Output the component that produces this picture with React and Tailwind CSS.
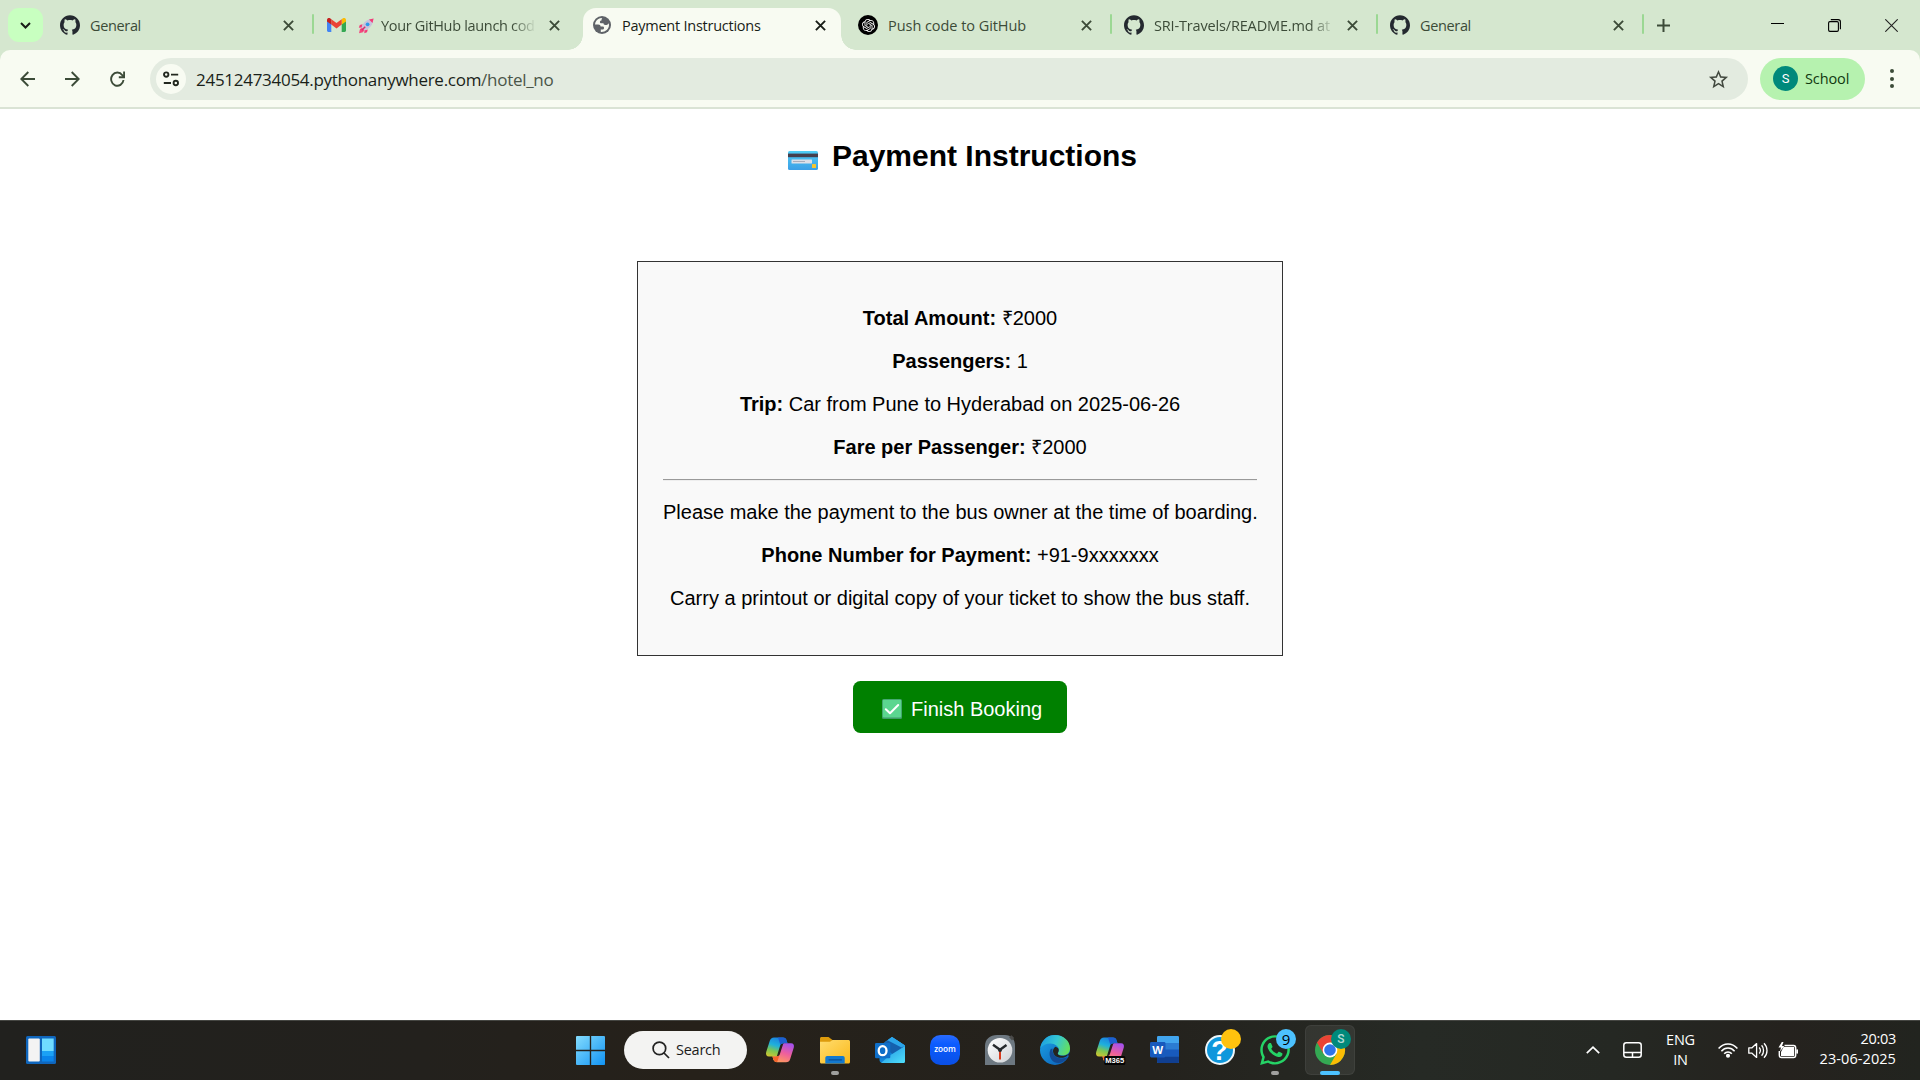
import React from "react";
import { SiGithub, SiOpenai } from "react-icons/si";
import { FaWhatsapp } from "react-icons/fa";
import { MdStarBorder } from "react-icons/md";

/* ---------- small shared glyphs ---------- */

function Cross({ className }) {
  return (
    <svg className={className} viewBox="0 0 11 11" fill="none" stroke="currentColor" strokeWidth="1.9">
      <path d="M0.9 0.9 10.1 10.1M10.1 0.9 0.9 10.1" />
    </svg>
  );
}

function GmailIcon() {
  return (
    <svg className="h-[14px] w-[19px]" viewBox="0 0 19 14">
      <path d="M0 2.2V12.6C0 13.4.6 14 1.4 14H4.3V5.6Z" fill="#4285f4" />
      <path d="M19 2.2V12.6c0 .8-.6 1.4-1.4 1.4H14.7V5.6Z" fill="#34a853" />
      <path d="M14.7 1.2V6.6L19 3.4V1.9C19 .2 17-.7 15.600.4Z" fill="#fbbc04" />
      <path d="M4.300 6.600V1.200L9.500 5.100 14.700 1.200V6.600L9.500 10.500Z" fill="#ea4335" />
      <path d="M0 1.900V3.400L4.300 6.600V1.200L3.400.4C2-.7 0 .2 0 1.900Z" fill="#c5221f" />
    </svg>
  );
}

function RocketIcon() {
  return (
    <svg className="h-4 w-4 shrink-0" viewBox="0 0 16 16">
      <path d="M4.500 6.200 1.800 7 .8 9.800 4 9.500ZM9.800 11.500 9 14.200 6.300 15.300 6.500 12Z" fill="#f23c78" />
      <path d="M1 15.200 2 11 4.200 9.800 6.300 12 5 14.200Z" fill="#f5487e" />
      <path d="M3.500 9.200C5 5 8.500 1.800 12.500 1L15 3.500C14.200 7.500 11 11 6.800 12.500Z" fill="#c9c3dc" />
      <path d="M11 1.500 15.600.400 14.500 5Z" fill="#f23c78" />
      <circle cx="9.600" cy="6.300" r="1.900" fill="#2f9bea" />
      <path d="M3.800 12.200 7.200 8.800" stroke="#d92f6c" strokeWidth="1.500" />
    </svg>
  );
}

function GlobeIcon() {
  return (
    <svg className="h-[18px] w-[18px] shrink-0" viewBox="0 0 18 18">
      <circle cx="9" cy="9" r="9" fill="#5f6368" />
      <path d="M9.200 2C6 2 3.300 4 2.300 6.800L2 8.600H5.200C6.800 8.600 7.600 9.400 7.600 10.600H9.800C10.600 10.600 11 11.200 11 12 11 13 10.300 13.600 9.300 13.600H7.800V15.900C12 16.300 16 13.200 16 9L15.700 7.300C15 8.700 13.800 9 12.300 9 11 9 10.500 8.400 10.500 7.300H8.300C7.300 7.300 6.900 6.700 6.900 5.900 6.900 5 7.500 4.400 8.500 4.400 8.500 3.300 8.700 2.600 9.200 2Z" fill="#f8fbf2" />
    </svg>
  );
}

function OpenAiIcon() {
  return (
    <span className="flex h-5 w-5 items-center justify-center rounded-full bg-black">
      <SiOpenai className="h-[13px] w-[13px] text-white" />
    </span>
  );
}

/* ---------- tab strip ---------- */

const GH = <SiGithub className="h-5 w-5 text-[#24292f]" />;

const tabs = [
  { icon: GH, title: "General", track: "tracking-[-0.35px]", sep: true },
  { icon: <GmailIcon />, title: "Your GitHub launch cod", track: "tracking-[-0.32px]", rocket: true, fade: true },
  { icon: <GlobeIcon />, title: "Payment Instructions", track: "tracking-[-0.25px]", active: true },
  { icon: <OpenAiIcon />, title: "Push code to GitHub", track: "tracking-[-0.05px]", sep: true },
  { icon: GH, title: "SRI-Travels/README.md at", track: "tracking-[-0.16px]", sep: true, fade: true },
  { icon: GH, title: "General", track: "tracking-[-0.35px]", sep: true },
];

function Tab({ tab }) {
  return (
    <div className={`relative flex h-[50px] w-[266px] shrink-0 items-center pl-[14px] ${tab.active ? "text-[#181d17]" : "text-[#3c4b38]"}`}>
      {tab.active && (
        <>
          <div className="absolute top-[7.500px] right-[3px] bottom-0 left-[5px] rounded-t-[13px] bg-[#f8fbf2]" />
          <div className="absolute bottom-0 left-[-10px] h-[15px] w-[15px] bg-[radial-gradient(circle_at_0_0,transparent_14.500px,#f8fbf2_15px)]" />
          <div className="absolute right-[-12px] bottom-0 h-[15px] w-[15px] bg-[radial-gradient(circle_at_100%_0,transparent_14.500px,#f8fbf2_15px)]" />
        </>
      )}
      <div className="relative flex w-5 shrink-0 justify-center">{tab.icon}</div>
      <div
        className={`relative ml-[10px] flex w-[179px] items-center gap-[7px] pt-[2px] whitespace-nowrap text-[14.5px] leading-5 ${tab.track} ${tab.fade ? "[mask-image:linear-gradient(to_right,black_87%,transparent_101%)]" : ""}`}
      >
        {tab.rocket && <span className="ml-[2px]"><RocketIcon /></span>}
        <span>{tab.title}</span>
      </div>
      <Cross className="relative ml-[14px] h-[11px] w-[11px] shrink-0" />
      {tab.sep && <div className="absolute top-[14px] right-[-2px] h-5 w-[2.500px] rounded-full bg-[#9bd893]" />}
    </div>
  );
}

function TabStrip() {
  return (
    <div className="flex h-[50px]">
      <div className="mt-2 ml-2 flex h-[34px] w-[34.500px] items-center justify-center rounded-[11px] bg-[#c8ffc0]">
        <svg className="h-[7px] w-[11px]" viewBox="0 0 11 7" fill="none" stroke="#181d17" strokeWidth="2">
          <path d="M1 1 5.500 5.500 10 1" />
        </svg>
      </div>
      <div className="ml-[3.500px] flex">
        {tabs.map((t, i) => (
          <Tab key={i} tab={t} />
        ))}
      </div>
      <div className="flex flex-1 items-center justify-between pr-[22.500px] pl-[15px]">
        <svg className="h-[13px] w-[13px]" viewBox="0 0 13 13" stroke="#3c4b38" strokeWidth="2">
          <path d="M6.500 0V13M0 6.500H13" />
        </svg>
        <div className="flex items-center gap-[44px] text-black">
          <div className="mb-[3px] h-px w-[13px] bg-black" />
          <svg className="h-[13px] w-[13px]" viewBox="0 0 13 13" fill="none" stroke="currentColor" strokeWidth="1.100">
            <rect x=".6" y="2.600" width="9.800" height="9.800" rx="1.300" />
            <path d="M2.800.6H10.200C11.500.6 12.400 1.500 12.400 2.800V10.200" />
          </svg>
          <svg className="h-[13px] w-[13px]" viewBox="0 0 13 13" stroke="#222" strokeWidth="1.100">
            <path d="M.3.3 12.700 12.700M12.700.3.3 12.700" />
          </svg>
        </div>
      </div>
    </div>
  );
}

/* ---------- toolbar ---------- */

function Toolbar() {
  return (
    <div className="flex h-[59px] items-center rounded-t-[10px] border-b-2 border-[#dae3d5] bg-[#f8fbf2] pl-5 text-[#3c4b38]">
      <svg className="h-4 w-[15px]" viewBox="0 0 15 16" fill="none" stroke="currentColor" strokeWidth="1.900">
        <path d="M15 8H1.500M8.300 1 1.300 8 8.300 15" />
      </svg>
      <svg className="ml-[30px] h-4 w-[15px]" viewBox="0 0 15 16" fill="none" stroke="currentColor" strokeWidth="1.900">
        <path d="M0 8H13.500M6.700 1 13.700 8 6.700 15" />
      </svg>
      <svg className="ml-[30px] h-4 w-[15px]" viewBox="0 0 15 16" fill="none" stroke="currentColor" strokeWidth="1.900">
        <path d="M13.500 9A6.200 6.600 0 1 1 12.300 4.200L14 6" />
        <path d="M14.100.6V6.300H8.800" />
      </svg>
      <div className="ml-[25px] flex h-[42px] w-[1598px] items-center rounded-full bg-[#e3ebe0] pr-[19px] pl-[6px]">
        <div className="flex h-[30px] w-[30px] items-center justify-center rounded-full bg-[#f8fbf2]">
          <svg className="h-4 w-4" viewBox="0 0 16 16" fill="none" stroke="#22281f" strokeWidth="1.900">
            <circle cx="3.200" cy="3.600" r="2.200" />
            <path d="M8 3.600H15.200M.8 12H8" />
            <circle cx="12.800" cy="12" r="2.200" />
          </svg>
        </div>
        <span className="ml-[10px] flex-1 pt-[2px] text-[17px] leading-6 tracking-[-0.28px] text-[#1a1f19]">
          245124734054.pythonanywhere.com<span className="text-[#4a5548]">/hotel_no</span>
        </span>
        <MdStarBorder className="mt-px h-[23px] w-[23px] translate-x-px text-[#42493f]" />
      </div>
      <div className="ml-3 flex h-[42px] w-[105px] items-center rounded-full bg-[#b6f2af] pl-[13px]">
        <span className="flex h-[25px] w-[25px] items-center justify-center rounded-full bg-[#00897b] font-['Roboto'] text-[13px] text-white">S</span>
        <span className="ml-[7px] text-[14.500px] tracking-[-0.1px] text-[#10380f]">School</span>
      </div>
      <div className="ml-[25px] flex flex-col gap-[3.200px]">
        <i className="h-1 w-1 rounded-full bg-[#3c4b38]" />
        <i className="h-1 w-1 rounded-full bg-[#3c4b38]" />
        <i className="h-1 w-1 rounded-full bg-[#3c4b38]" />
      </div>
    </div>
  );
}

/* ---------- page ---------- */

function CardEmoji() {
  return (
    <svg className="h-[19px] w-[30px]" viewBox="0 0 30 19">
      <defs>
        <linearGradient id="card" x1="0" y1="0" x2="0" y2="1">
          <stop offset="0" stopColor="#4fcdf5" />
          <stop offset="1" stopColor="#3c9fe6" />
        </linearGradient>
      </defs>
      <rect width="30" height="19" rx="1.600" fill="url(#card)" />
      <rect y="2.600" width="30" height="3.600" fill="#443f4d" />
      <rect x="3.500" y="8.500" width="20.500" height="4" rx=".5" fill="#dcdfe8" />
      <rect x="5" y="10" width="12" height="1" fill="#a9adba" />
      <rect x="24" y="13" width="4" height="4" rx=".6" fill="#f7c52e" />
    </svg>
  );
}

function CheckEmoji() {
  return (
    <svg className="h-5 w-5" viewBox="0 0 20 20">
      <rect width="20" height="20" rx="1.500" fill="#3f9b68" />
      <rect x=".8" y=".8" width="18.400" height="17.800" rx="1" fill="#5bd68f" />
      <path d="M3.800 10.200 8 14.300 16.200 6" fill="none" stroke="#fff" strokeWidth="2" strokeLinecap="round" strokeLinejoin="round" />
    </svg>
  );
}

function Page() {
  return (
    <main className="flex flex-1 flex-col items-center bg-white pt-[30px] font-['Liberation_Sans',Arial,sans-serif] text-[20px] leading-[23px] text-black">
      <h2 className="flex h-[34px] items-center text-[30px] leading-[34px] font-bold">
        <span className="mt-[9px] flex w-[49px] pl-[5px]">
          <CardEmoji />
        </span>
        Payment Instructions
      </h2>
      <section className="mt-[88px] flex h-[395px] w-[646px] flex-col gap-5 border border-[#333] bg-[#f9f9f9] px-[25px] pt-[45px] text-center whitespace-nowrap">
        <p><b>Total Amount:</b> ₹2000</p>
        <p><b>Passengers:</b> 1</p>
        <p><b>Trip:</b> Car from Pune to Hyderabad on 2025-06-26</p>
        <p><b>Fare per Passenger:</b> ₹2000</p>
        <div className="h-[2px] self-stretch border-t border-b border-t-[#9a9a9a] border-b-[#eee]" />
        <p>Please make the payment to the bus owner at the time of boarding.</p>
        <p><b>Phone Number for Payment:</b> +91-9xxxxxxx</p>
        <p>Carry a printout or digital copy of your ticket to show the bus staff.</p>
      </section>
      <button className="mt-[25px] flex h-[52px] w-[214px] items-center rounded-[7.500px] bg-[#008000] pl-[29px] text-white">
        <span className="mt-[3px]"><CheckEmoji /></span>
        <span className="mt-[5px] ml-[9px]">Finish Booking</span>
      </button>
    </main>
  );
}

/* ---------- taskbar icons, 30 x 30 each ---------- */

function Icon({ children }) {
  return <svg className="h-[30px] w-[30px] overflow-visible" viewBox="0 0 30 30">{children}</svg>;
}

function Gradients() {
  return (
    <svg className="absolute h-0 w-0">
      <defs>
        <linearGradient id="win" gradientUnits="userSpaceOnUse" x1="0" y1="0" x2="30" y2="30">
          <stop offset="0" stopColor="#84dcfd" /><stop offset="1" stopColor="#1193f3" />
        </linearGradient>
        <linearGradient id="copL" x1="0.600" y1="0" x2="0.300" y2="1">
          <stop offset="0" stopColor="#1a7fe0" /><stop offset=".35" stopColor="#1fb0dc" /><stop offset=".6" stopColor="#7cc653" /><stop offset="1" stopColor="#f7c51e" />
        </linearGradient>
        <linearGradient id="copR" x1="0.700" y1="0" x2="0.300" y2="1">
          <stop offset="0" stopColor="#a651ec" /><stop offset=".5" stopColor="#ee5f9d" /><stop offset="1" stopColor="#ff9a5e" />
        </linearGradient>
        <linearGradient id="fold" x1="0" y1="0" x2="1" y2="1">
          <stop offset="0" stopColor="#ffdc6e" /><stop offset="1" stopColor="#fbb91a" />
        </linearGradient>
        <linearGradient id="edgeTop" x1="0" y1="0.300" x2="1" y2="0.600">
          <stop offset="0" stopColor="#1c9ee0" /><stop offset=".5" stopColor="#35c7d3" /><stop offset="1" stopColor="#66e05a" />
        </linearGradient>
        <linearGradient id="edgeMid" x1="0" y1="0" x2="1" y2="1">
          <stop offset="0" stopColor="#1ca4e6" /><stop offset="1" stopColor="#0a5bb5" />
        </linearGradient>
        <linearGradient id="olk" x1="0" y1="0" x2="1" y2="1">
          <stop offset="0" stopColor="#1e8ee0" /><stop offset="1" stopColor="#50e0fb" />
        </linearGradient>
        <linearGradient id="clk" x1="0" y1="0" x2="1" y2="1">
          <stop offset="0" stopColor="#ffffff" /><stop offset="1" stopColor="#cfd2d6" />
        </linearGradient>
        <linearGradient id="zm" x1="0" y1="0" x2="0" y2="1">
          <stop offset="0" stopColor="#2a6bff" /><stop offset=".3" stopColor="#0b5cff" /><stop offset="1" stopColor="#0a4fe6" />
        </linearGradient>
      </defs>
    </svg>
  );
}

function CopilotShape() {
  return (
    <>
      <path d="M9 2.500H18C20 2.500 21 3.600 21.500 5.200L22.500 8.300H18.500C16.500 8.300 15.500 9.300 15 11L11.500 22.500C11 24.500 10 27 8.500 25L7.500 21.500H4C1.500 21.500.5 19.500 1.200 17L4.800 5.800C5.400 3.800 6.800 2.500 9 2.500Z" fill="url(#copL)" />
      <path d="M13 2.500H18C20 2.500 21 3.600 21.500 5.200L22.500 8.300H18.500C17 8.300 16 9 15.500 10.200Z" fill="#1d5fd0" />
      <path d="M21 27.200H12C10 27.200 9 26.200 8.500 24.600L7.500 21.500H11.500C13.500 21.500 14.500 20.500 15 18.800L18 9.500C18.400 8.500 19 8.300 20 8.300H26C28.500 8.300 29.400 10 28.800 12.500L25.200 23.900C24.600 26 23.200 27.200 21 27.200Z" fill="url(#copR)" />
      <path d="M8.500 24.600 7.500 21.500H11.500C13 21.500 14 21 14.500 19.800L12.500 26.200C12 27.600 9.500 27.500 8.500 24.600Z" fill="#f4642c" />
    </>
  );
}

const apps = [
  { name: "Copilot", icon: <Icon><CopilotShape /></Icon> },
  {
    name: "Explorer", dot: true,
    icon: (
      <Icon>
        <path d="M0 3.500C0 2.600.7 2 1.500 2H8.500L12.500 5V9H0Z" fill="#dd9b0c" />
        <path d="M0 6.800H10L12.500 5H28.500C29.400 5 30 5.600 30 6.500V27C30 27.900 29.400 28.500 28.500 28.500H1.500C.6 28.500 0 27.900 0 27Z" fill="url(#fold)" />
        <path d="M5.300 28.500V23C5.300 21.800 6 21 7.200 21H22.800C24 21 24.700 21.800 24.700 23V28.500Z" fill="#1379cf" />
        <path d="M9 24.800H21.500" stroke="#0a4f98" strokeWidth="1.200" strokeLinecap="round" />
      </Icon>
    ),
  },
  {
    name: "Outlook",
    icon: (
      <Icon>
        <path d="M4.500 11 17 2 30 10.500V26C30 27.400 29.300 28 28 28H8C6 28 4.500 27 4.500 25Z" fill="#1184d8" />
        <path d="M17 2 30 10.500 16 18V9L10.500 6.700Z" fill="#2ba5ea" />
        <path d="M10.500 6.700 13.500 4.500 28 9.300V12.500L18 19.500 8 12Z" fill="#1560ae" />
        <path d="M17 2 30 10.500 26.500 12.500 12.500 5.300Z" fill="#2ba5ea" />
        <path d="M14 21 30 11V26C30 27.400 29.300 28 28 28H6Z" fill="url(#olk)" />
        <rect y="8" width="15.300" height="15.300" rx="1.200" fill="#0f6fc9" />
        <ellipse cx="7.600" cy="15.700" rx="3.900" ry="4.500" fill="none" stroke="#fff" strokeWidth="2.300" />
      </Icon>
    ),
  },
  {
    name: "Zoom",
    icon: (
      <Icon>
        <rect width="30" height="30" rx="10.500" fill="url(#zm)" />
        <text x="15" y="17.300" textAnchor="middle" fontFamily="Open Sans, sans-serif" fontWeight="600" fontSize="8.200" fill="#fff">zoom</text>
      </Icon>
    ),
  },
  {
    name: "Clock",
    icon: (
      <Icon>
        <path d="M0 30V11C0 4 5 0 12 0H20C26 0 30 4 30 11V30Z" fill="#6d7881" />
        <path d="M24 2 26.500.3 29.200 3 27 5.500Z" fill="#4b4b4a" />
        <circle cx="15" cy="15.300" r="12.300" fill="url(#clk)" />
        <path d="M15 16V24.500" stroke="#d83b1e" strokeWidth="2" />
        <path d="M8 9.800 15 14.800 21.500 10" fill="none" stroke="#26292c" strokeWidth="2.400" />
        <circle cx="15" cy="15" r="2" fill="#26292c" />
      </Icon>
    ),
  },
  {
    name: "Edge",
    icon: (
      <Icon>
        <circle cx="15" cy="15" r="15" fill="url(#edgeMid)" />
        <path d="M.3 13C2 4.500 8 0 15 0 23.500 0 30 6 30 13.200 30 18 26.500 20.500 22.500 20.500 19.500 20.500 17.700 19.600 17.700 18.600 17.700 17.800 18.900 17.300 18.900 15 18.900 11.500 15 8.500 10.500 8.500 6 8.500 2.500 10.500.3 13Z" fill="url(#edgeTop)" />
        <path d="M10.800 14C8.500 18 9.500 24 14 27 18.500 29.500 24.500 27.500 28 22 25 23.700 20 24.200 16.500 22 13.500 20.200 12 17 12.500 13.500Z" fill="#124a94" />
        <path d="M27.500 20.500C24.500 23.500 18 23.700 14.800 20.500 12.200 17.500 12.500 13.500 15.500 11.800 18 12.500 19 14 18.700 15.700 18.300 17.300 17.700 17.900 17.800 18.700 18.300 21 24.500 21.500 27.500 19.500L30 22V17Z" fill="#242320" />
      </Icon>
    ),
  },
  {
    name: "M365",
    icon: (
      <Icon>
        <CopilotShape />
        <rect x="9.300" y="21" width="21" height="9" rx="1.500" fill="#050505" />
        <text x="19.800" y="28.200" textAnchor="middle" fontFamily="Liberation Sans, sans-serif" fontWeight="700" fontSize="7.600" fill="#fff">M365</text>
      </Icon>
    ),
  },
  {
    name: "Word",
    icon: (
      <Icon>
        <rect x="7" y="1" width="22" height="27" rx="1.500" fill="#2b7cd3" />
        <path d="M7 8V2.500C7 1.700 7.700 1 8.500 1H27.500C28.300 1 29 1.700 29 2.500V8Z" fill="#41a5ee" />
        <rect x="7" y="14.500" width="22" height="7" fill="#185abd" />
        <path d="M7 21.500H29V26.500C29 27.300 28.300 28 27.500 28H8.500C7.700 28 7 27.300 7 26.500Z" fill="#103f91" />
        <rect y="7" width="15.500" height="15.500" rx="1.400" fill="#185abd" />
        <text x="7.700" y="18.600" textAnchor="middle" fontFamily="Liberation Sans, sans-serif" fontWeight="700" fontSize="11.500" fill="#fff">W</text>
      </Icon>
    ),
  },
  {
    name: "Help",
    icon: (
      <Icon>
        <circle cx="15" cy="15" r="14" fill="#0e97dc" stroke="#eef6fa" strokeWidth="2" />
        <text x="14.500" y="24.500" textAnchor="middle" fontFamily="Liberation Sans, sans-serif" fontWeight="700" fontSize="27" fill="#fff">?</text>
        <circle cx="26" cy="4" r="10" fill="#ffc20e" />
      </Icon>
    ),
  },
  {
    name: "WhatsApp", dot: true,
    icon: (
      <div className="relative">
        <FaWhatsapp className="h-[34px] w-[34px] text-[#25d366]" />
        <span className="absolute top-[-4px] right-[-4px] flex h-5 w-5 items-center justify-center rounded-full bg-[#4cc2ff] text-[15px] leading-5 text-black">9</span>
      </div>
    ),
  },
  {
    name: "Chrome", active: true,
    icon: (
      <div className="relative">
        <Icon>
          <circle cx="15" cy="15" r="15" fill="#34a853" />
          <path d="M15 15 2 7.500A15 15 0 0 1 28 7.500H15Z" fill="#ea4335" />
          <path d="M28 7.500A15 15 0 0 1 15 30L21.500 18.750 15 7.500Z" fill="#fbbc04" />
          <path d="M2 7.500 8.500 18.750 15 15V7.500Z" fill="#ea4335" />
          <circle cx="15" cy="15" r="7.400" fill="#fff" />
          <circle cx="15" cy="15" r="5.800" fill="#2f74ea" />
        </Icon>
        <span className="absolute top-[-6px] right-[-6px] flex h-5 w-5 items-center justify-center rounded-full bg-[#00897b] font-['Roboto'] text-[12px] leading-5 font-medium text-[#b5d9d5]">S</span>
      </div>
    ),
  },
];

function Taskbar() {
  return (
    <footer className="flex h-[60px] bg-[linear-gradient(90deg,#21211e_0%,#23211d_22%,#26211a_36%,#24221d_60%,#262a25_74%,#252823_84%,#25221e_93%,#22241f_100%)] text-[14.500px] text-white shadow-[inset_0_1px_0_#454642]">
      <Gradients />
      <div className="flex w-[576px] items-center pl-[26px]">
        <svg className="h-7 w-[30px]" viewBox="0 0 30 28">
          <rect width="30" height="28" rx="1.500" fill="#0f66bd" />
          <rect x="2.300" y="2.500" width="11.500" height="23" rx="1" fill="#f3f3f3" />
          <rect x="16" y="2.500" width="11.700" height="12.500" fill="#6fdcff" />
          <rect x="16" y="15" width="11.700" height="5" fill="#1ba1f5" />
          <rect x="16" y="20" width="11.700" height="5.500" fill="#0a84ea" />
        </svg>
      </div>
      <div className="flex items-center">
        <svg className="h-[29px] w-[29px]" viewBox="0 0 30 30" fill="url(#win)">
          <path d="M1 0H14.300V14.300H0V1C0 .4.400 0 1 0ZM15.700 0H29C29.600 0 30 .4 30 1V14.300H15.700ZM0 15.700H14.300V30H1C.4 30 0 29.600 0 29ZM15.700 15.700H30V29C30 29.600 29.600 30 29 30H15.700Z" />
        </svg>
        <div className="ml-[19px] flex h-[38px] w-[123px] items-center rounded-full bg-[#f3f3f2] pl-7 text-[#1b1b1b]">
          <svg className="h-[18px] w-[18px]" viewBox="0 0 18 18" fill="none" stroke="#222" strokeWidth="1.700">
            <circle cx="7.400" cy="7.400" r="6.300" />
            <path d="M12 12 17 17" />
          </svg>
          <span className="ml-[6px] tracking-[-0.25px]">Search</span>
        </div>
      </div>
      <div className="ml-[5.500px] flex">
        {apps.map((a) => (
          <div key={a.name} className="relative flex w-[55px] items-center justify-center">
            {a.active && <div className="absolute top-[5px] left-[2px] h-[50px] w-[50px] rounded-[6px] border border-white/5 bg-white/7" />}
            {a.icon}
            {a.dot && <div className="absolute bottom-[5px] left-[23px] h-1 w-2 rounded-full bg-[#a0a09e]" />}
            {a.active && <div className="absolute bottom-[5px] left-[17.500px] h-1 w-5 rounded-full bg-[#4cc2ff]" />}
          </div>
        ))}
      </div>
      <div className="flex flex-1 items-center justify-end pr-[24px]">
        <svg className="h-2 w-[14px]" viewBox="0 0 14 8" fill="none" stroke="#fff" strokeWidth="1.700"><path d="M.8 7.200 7 1.200 13.200 7.200" /></svg>
        <svg className="ml-[23px] h-4 w-[19px]" viewBox="0 0 19 16" fill="none" stroke="#fff" strokeWidth="1.500">
          <rect x=".8" y=".8" width="17.400" height="14.400" rx="2.500" /><path d="M1 10.500H18M9.500 10.500V15" />
        </svg>
        <div className="mr-px ml-6 w-[29px] text-center leading-5 tracking-[-0.2px]">ENG<br />IN</div>
        <svg className="ml-[22px] h-[15px] w-5" viewBox="0 0 20 15" fill="none" stroke="#fff" strokeWidth="1.500">
          <path d="M.6 5.500C5.800-.6 14.200-.6 19.400 5.500M3.400 8.200C7 4 13 4 16.600 8.200M6.200 10.800C8.200 8.300 11.800 8.300 13.800 10.800" />
          <circle cx="10" cy="12.800" r="1.300" fill="#fff" />
        </svg>
        <svg className="ml-[10px] h-[17px] w-5" viewBox="0 0 20 17" fill="none" stroke="#fff" strokeWidth="1.300" strokeLinejoin="round">
          <path d="M.8 5.800H4L8.600 1.600V15.400L4 11.200H.8Z" />
          <path d="M11.200 5.500C12.600 7.200 12.600 9.800 11.200 11.500M13.600 3.300C16.200 6.200 16.200 10.800 13.600 13.700M16 1.200C20 5.200 20 11.800 16 15.800" />
        </svg>
        <svg className="ml-[10px] h-[17px] w-5" viewBox="0 0 20 17">
          <path d="M6.500 3.500H15.500C16.900 3.500 17.700 4.300 17.700 5.700V13.300C17.700 14.700 16.900 15.500 15.500 15.500H3.500C2.100 15.500 1.300 14.700 1.300 13.300V9" fill="none" stroke="#fff" strokeWidth="1.400" />
          <path d="M5.500 5H16.200V14H3V10Z" fill="#fff" />
          <rect x="18.300" y="7.300" width="1.700" height="4.400" rx=".8" fill="#fff" />
          <path d="M3.800 0 .5 5.500H3L2 9.500 6.300 4H4L5.500 0Z" fill="#fff" />
        </svg>
        <div className="mb-[2px] ml-[21px] w-[77px] text-right leading-5 whitespace-nowrap">
          <span className="tracking-[-0.3px]">20:03</span><br />
          <span className="tracking-[0.080px]">23-06-2025</span>
        </div>
      </div>
    </footer>
  );
}

export default function App() {
  return (
    <div className="flex h-[1080px] w-[1920px] flex-col overflow-hidden bg-white font-['Open_Sans','Noto_Sans',sans-serif]">
      <header className="bg-[#d5e7cf]">
        <TabStrip />
        <Toolbar />
      </header>
      <Page />
      <Taskbar />
    </div>
  );
}
